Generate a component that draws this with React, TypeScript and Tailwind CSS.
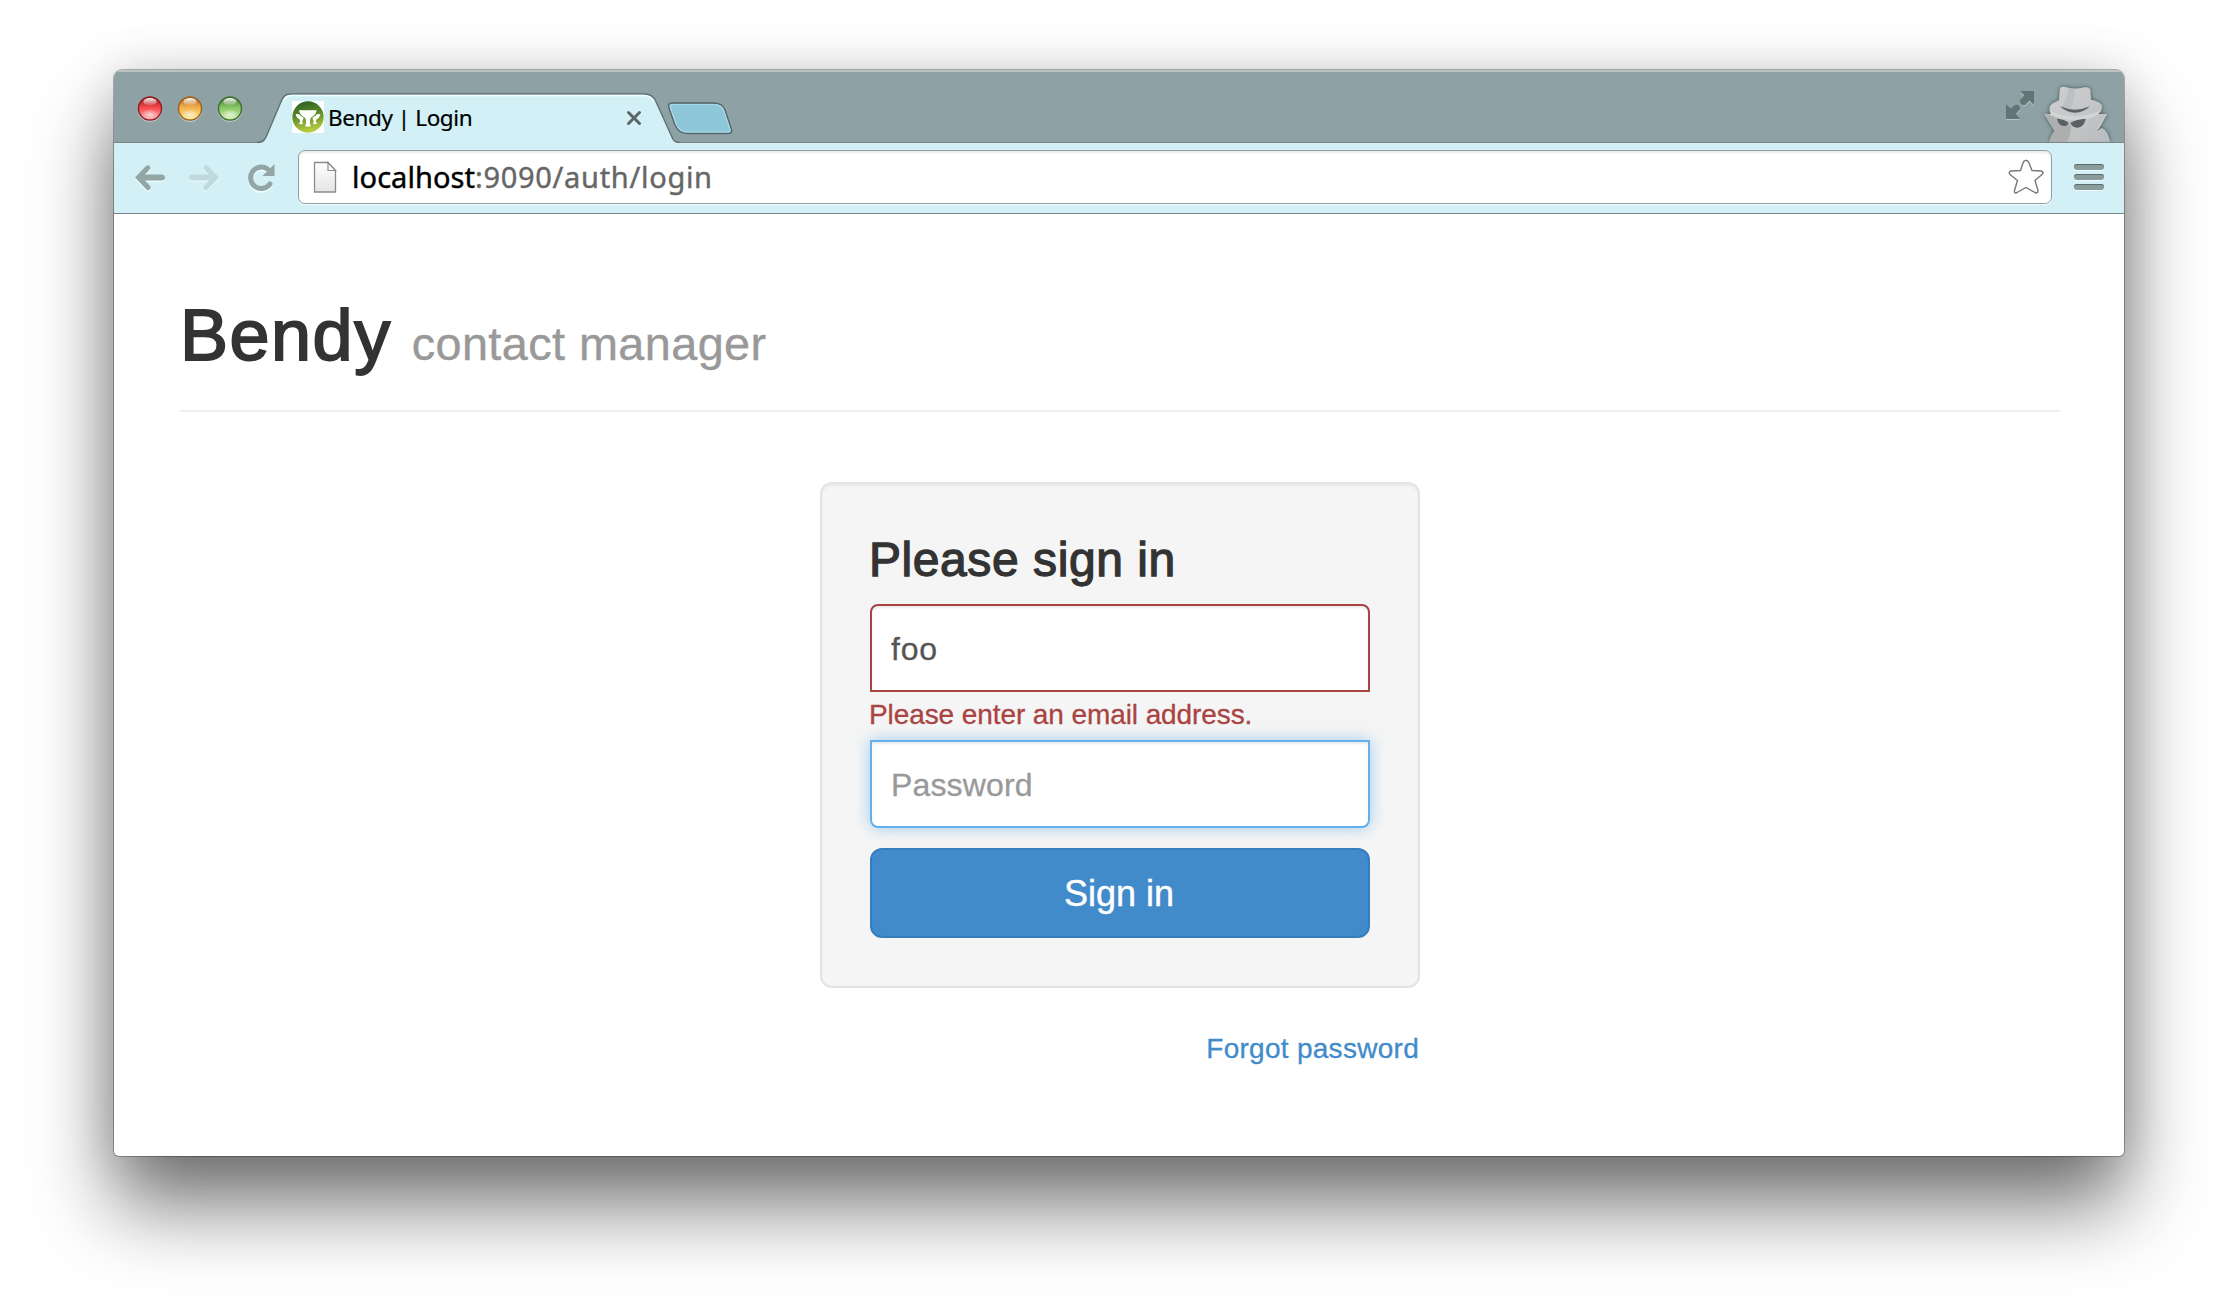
import React from "react";

function Light({ id, dark, mid, glow }: { id: string; dark: string; mid: string; glow: string }) {
  return (
    <svg width="26" height="28" viewBox="0 0 26 28" className="block">
      <defs>
        <linearGradient id={id + "b"} x1="0" y1="0" x2="0" y2="1">
          <stop offset="0" stopColor={dark} />
          <stop offset="0.45" stopColor={mid} />
          <stop offset="1" stopColor={glow} />
        </linearGradient>
        <linearGradient id={id + "s"} x1="0" y1="0" x2="0" y2="1">
          <stop offset="0" stopColor="#fff" stopOpacity="0.95" />
          <stop offset="1" stopColor="#fff" stopOpacity="0.1" />
        </linearGradient>
        <radialGradient id={id + "g"}>
          <stop offset="0" stopColor="#fff" stopOpacity="0.65" />
          <stop offset="1" stopColor="#fff" stopOpacity="0" />
        </radialGradient>
      </defs>
      <circle cx="13" cy="14.9" r="12" fill="#c3d0d2" opacity="0.8" />
      <circle cx="13" cy="13.5" r="11.5" fill={"url(#" + id + "b)"} stroke={dark} strokeWidth="1.4" />
      <ellipse cx="13" cy="19.5" rx="9" ry="5.5" fill={"url(#" + id + "g)"} />
      <ellipse cx="13" cy="6.7" rx="6.6" ry="3.6" fill={"url(#" + id + "s)"} />
    </svg>
  );
}

function Favicon() {
  return (
    <svg width="32" height="32" viewBox="0 0 96 96" className="block bg-white">
      <defs>
        <linearGradient id="fav" x1="0" y1="0" x2="0.2" y2="1">
          <stop offset="0" stopColor="#245c22" />
          <stop offset="0.5" stopColor="#5c8a2a" />
          <stop offset="1" stopColor="#b4cc3e" />
        </linearGradient>
      </defs>
      <circle cx="48" cy="48" r="47" fill="url(#fav)" />
      <g fill="#fff">
        <path d="M21 28H74Q72 42 59 48Q54 51 54 60V69L57 75Q48 80 39 75L42 69V60Q42 51 36 48Q23 42 21 28Z" />
        <path d="M11 39L22 40Q26 48 34 49V55Q31 57 31 62L33 68Q27 72 21 68L24 62V56Q13 52 11 39Z" />
        <path d="M85 39L74 40Q70 48 62 49V55Q65 57 65 62L63 68Q69 72 75 68L72 62V56Q83 52 85 39Z" />
      </g>
    </svg>
  );
}

function Incognito() {
  return (
    <svg width="72" height="60" viewBox="306 67 216 180" className="block overflow-visible">
      <defs>
        <linearGradient id="spy" x1="0" y1="0" x2="1" y2="1">
          <stop offset="0" stopColor="#cfd0d1" />
          <stop offset="1" stopColor="#b9bcbe" />
        </linearGradient>
        <filter id="spyshadow" x="-20%" y="-20%" width="140%" height="120%">
          <feDropShadow dx="0" dy="0" stdDeviation="6" floodColor="#33403f" floodOpacity="0.9" />
        </filter>
        <clipPath id="spyclip">
          <path d="M360 86Q362 79 376 82Q405 92 434 83Q450 82 451 92L453 120Q488 128 486 142Q484 158 473 163H501L476 208L487 206Q504 214 510 247H328Q333 226 344 214L312 162L333 164Q320 138 345 128L357 122Z" />
        </clipPath>
        <clipPath id="spyframe">
          <path d="M290 50H540V246H290Z" />
        </clipPath>
      </defs>
      <g clipPath="url(#spyframe)">
        <path
          filter="url(#spyshadow)"
          fill="url(#spy)"
          d="M360 86Q362 79 376 82Q405 92 434 83Q450 82 451 92L453 120Q488 128 486 142Q484 158 473 163H501L476 208L487 206Q504 214 510 247H328Q333 226 344 214L312 162L333 164Q320 138 345 128L357 122Z"
        />
      </g>
      <g clipPath="url(#spyclip)">
        <path fill="#b0b2b3" d="M388 78H407Q404 120 388 154L360 146Q380 130 388 78Z" opacity="0.45" />
        <path fill="#a5a7a7" d="M312 162L350 172L392 196Q396 220 380 247H320L344 214Z" opacity="0.75" />
        <path fill="#d5d7d8" d="M326 150Q350 166 400 170Q460 168 486 148L476 164Q450 182 404 182Q350 180 330 164Z" opacity="0.8" />
        <path fill="#c9cbcc" d="M462 222L497 164H503L476 208L487 206L478 214Z" />
        <path fill="#5a6060" d="M459 224L478 206L487 205Q470 212 459 224Z" />
      </g>
      <path fill="#5b6161" d="M360 140Q405 160 450 140Q430 159 405 159Q380 159 360 140Z" />
      <path fill="#5b6161" d="M351 177Q374 178 386 189Q383 199 371 199Q355 197 351 177ZM437 177Q410 178 391 189Q396 204 414 204Q433 201 437 177Z" />
    </svg>
  );
}

function TitleBar() {
  return (
    <div className="flex h-[73px] shrink-0 border-t-2 border-[#bac4c5] bg-[#8ea2a5] shadow-[inset_0_-1px_0_#7c8685]">
      <div className="ml-[23px] mt-[23px] flex gap-[14px]">
        <Light id="r" dark="#8f1d20" mid="#f5484a" glow="#fda9a9" />
        <Light id="y" dark="#a0611c" mid="#f3b04c" glow="#fbe787" />
        <Light id="g" dark="#3f6e2c" mid="#86c663" glow="#cdeba4" />
      </div>
      <div className="relative ml-[14px] mt-[20px] h-[51px] w-[423px]">
        <svg width="423" height="51" viewBox="0 0 425 51" preserveAspectRatio="none" className="absolute inset-0 block">
          <path
            d="M0 51V50.500C6 50.500 8 48 10 43L24 10C26 5 28 2 34 2H389C396 2 399 5 401 10L416 43C418 48 419 50.500 425 50.500V51Z"
            fill="#d2f0f5"
          />
          <path
            d="M0 50.500C6 50.500 8 48 10 43L24 10C26 5 28 2 34 2H389C396 2 399 5 401 10L416 43C418 48 419 50.500 425 50.500"
            fill="none"
            stroke="#5f6f72"
            strokeWidth="1.4"
          />
          <path d="M27 8.500C28.500 5 31 3.500 35 3.500H388C394 3.500 397 5.500 399 9.500" fill="none" stroke="#f2fdff" strokeWidth="1.4" />
        </svg>
        <div className="relative flex h-[50px] items-center pl-[35px] pt-1">
          <div className="-mt-1">
            <Favicon />
          </div>
          <span className="ml-[4px] mt-[-2px] whitespace-nowrap font-['Noto_Sans',sans-serif] text-[22.5px] leading-[30px] tracking-[-0.42px] text-black [-webkit-text-stroke:0.2px_#000]">
            Bendy | Login
          </span>
          <svg width="16" height="16" viewBox="0 0 16 16" className="absolute left-[369px] top-[18px] block">
            <path d="M2.500 2.500L13.500 13.500M13.500 2.500L2.500 13.500" stroke="#5a6668" strokeWidth="3" strokeLinecap="round" />
          </svg>
        </div>
      </div>
      <svg width="68" height="36" viewBox="0 0 68 36" className="-ml-[14px] mt-[28px] block">
        <path
          d="M6 3H47C54 3 57 5 59 10L65 28C66.500 31 66 33.500 62 33.500H22C15 33.500 12 31 9 25L3 8C2 4.500 3 3 6 3Z"
          fill="#8ec7da"
          stroke="#566568"
          strokeWidth="1.5"
        />
        <path d="M4.500 8C4 5 5 4.500 7 4.500H47C53 4.500 56 6 57.500 10L63.500 28C64.500 31 64 32 62 32H22C16 32 13 30 10.500 25Z" fill="none" stroke="#a9d8e6" strokeWidth="1.200" />
      </svg>
      <div className="ml-auto flex">
        <svg width="30" height="30" viewBox="0 0 30 30" className="mr-[7px] mt-[18px] block">
          <g transform="translate(0 1.200)" fill="#b3c4c6">
            <path d="M15 1H29V15L24.500 10.500L20 15Q16 16 15 10L19.500 5.500Z" />
            <path d="M15 29H1V15L5.500 18.500L10 15Q15 14 15 19L11 24Z" />
          </g>
          <path d="M15 1H29V15L24.500 10.500L20 15Q14.500 16 15 10L19.500 5.500Z" fill="#617476" />
          <path d="M15 29H1V14L5.500 18.500L10 15Q15 14 15 19L11 24Z" fill="#617476" />
        </svg>
        <div className="mr-[10px] mt-[10px]">
          <Incognito />
        </div>
      </div>
    </div>
  );
}

const arrow = "M2 14.500L13.500 2.500Q16 1.500 17.500 4.500Q17.500 6 12 11.500H29Q32 12 32 14.500Q32 17 29 17.500H12L17.500 23.500Q18 27 14.500 27.500Z";

function Toolbar() {
  return (
    <div className="flex h-[71px] shrink-0 items-start border-b border-[#74868a] bg-[#d2f0f5] pt-[7px]">
      <svg width="33" height="32" viewBox="0 0 33 32" className="ml-[19px] mt-[13px] block">
        <path d={arrow} fill="#eefcff" transform="translate(0 1.500)" />
        <path d={arrow} fill="#93a6a5" />
      </svg>
      <svg width="33" height="32" viewBox="0 0 33 32" className="ml-[22px] mt-[13px] block">
        <path d={arrow} fill="#e4f8fc" transform="translate(33 1.500) scale(-1 1)" />
        <path d={arrow} fill="#bfd9df" transform="translate(33 0) scale(-1 1)" />
      </svg>
      <svg width="30" height="32" viewBox="0 0 30 32" className="ml-[26px] mt-[13px] block">
        <g transform="translate(0 1.500)">
          <path d="M20.500 6.500A10.700 10.700 0 1 0 23 21" fill="none" stroke="#eefcff" strokeWidth="5" strokeLinecap="round" />
        </g>
        <path d="M20.500 6A10.700 10.700 0 1 0 23 21" fill="none" stroke="#93a6a5" strokeWidth="5" strokeLinecap="round" />
        <path d="M27.500 1V13H15.500Z" fill="#93a6a5" />
      </svg>
      <div className="ml-[21px] flex h-[54px] w-[1754px] items-start rounded-[7px] border border-[#8da1a5] bg-white shadow-[inset_0_2px_2px_rgba(0,0,0,0.08),0_1px_0_#f0fcff]">
        <svg width="24" height="34" viewBox="0 0 24 34" className="ml-[14px] mt-[10px] block">
          <defs>
            <linearGradient id="doc" x1="0" y1="0" x2="0" y2="1">
              <stop offset="0" stopColor="#fff" />
              <stop offset="1" stopColor="#e4e4e4" />
            </linearGradient>
          </defs>
          <path d="M1.500 1.500H15L22.500 9.500V31H1.500Z" fill="url(#doc)" stroke="#8b8b8b" strokeWidth="1.300" />
          <path d="M15 1.500V9.500H22.500Z" fill="#fff" stroke="#8b8b8b" strokeWidth="1.200" />
        </svg>
        <span className="ml-[15px] mt-[6px] whitespace-nowrap font-['Noto_Sans',sans-serif] text-[29px] leading-[40px] tracking-[0.7px] text-[#666] [-webkit-text-stroke:0.4px_#666]">
          <span className="tracking-[0.05px] text-black [-webkit-text-stroke:0.4px_#000]">localhost</span>:9090/auth/login
        </span>
        <svg width="38" height="38" viewBox="0 0 38 38" className="ml-auto mr-[6px] mt-[7px] block">
          <path
            d="M19 2.500Q21 2 22 5L25 12.500L34 13Q37.500 14 35 16.500L28 22.500L31 32.500Q31 36 28 34.500L19 29.500L10 34.500Q7 36 7.500 32.500L10.500 22.500L3 16.500Q1 14 4 13L13.500 12.500L16 5Q17 2 19 2.500Z"
            fill="#fff"
            stroke="#777"
            strokeWidth="1.400"
          />
        </svg>
      </div>
      <div className="ml-[22px] mt-[14px] flex flex-col gap-1">
        <div className="h-[6px] w-[30px] rounded-[3px] bg-[#8a9d9b] shadow-[inset_0_1px_0_#5c6d6d,0_1px_0_#effcff]" />
        <div className="h-[6px] w-[30px] rounded-[3px] bg-[#8a9d9b] shadow-[inset_0_1px_0_#5c6d6d,0_1px_0_#effcff]" />
        <div className="h-[6px] w-[30px] rounded-[3px] bg-[#8a9d9b] shadow-[inset_0_1px_0_#5c6d6d,0_1px_0_#effcff]" />
      </div>
    </div>
  );
}

export default function App() {
  return (
    <div className="h-[1314px] w-[2238px] overflow-hidden bg-white pl-[114px] pt-[70px] font-['Liberation_Sans',Arial,sans-serif]">
      <div className="flex h-[1086px] w-[2010px] flex-col rounded-t-[8px] rounded-b-[5px] bg-white shadow-[0_0_0_1px_rgba(0,0,0,0.28),0_50px_80px_rgba(0,0,0,0.54),0_0_50px_rgba(0,0,0,0.14)]">
        <div className="flex flex-col overflow-hidden rounded-t-[8px]">
          <TitleBar />
          <Toolbar />
        </div>
        <main className="pl-[66px] pr-[64px]">
          <header className="flex h-[198px] items-baseline border-b-2 border-[#eee] pt-[81px] text-[72px] leading-[80px] text-[#333]">
            <h1 className="tracking-[1.5px] [-webkit-text-stroke:1.9px_#333]">Bendy</h1>
            <span className="ml-[20px] text-[46.8px] tracking-[0.42px] text-[#999] [-webkit-text-stroke:0.4px_#999]">contact manager</span>
          </header>
          <div className="mx-auto mt-[70px] w-[600px]">
            <form className="h-[506px] rounded-[12px] border-2 border-[#e3e3e3] bg-[#f5f5f5] px-[48px] pt-[48px] shadow-[inset_0_2px_2px_rgba(0,0,0,0.05)]">
              <h2 className="-ml-px text-[48px] leading-[56px] tracking-[0.57px] text-[#333] [-webkit-text-stroke:1.3px_#333]">Please sign in</h2>
              <div className="mt-[16px] flex h-[88px] items-center rounded-t-[8px] border-2 border-[#a94442] bg-white pl-[19px] pt-px text-[32px] tracking-[0.8px] text-[#555] shadow-[inset_0_2px_2px_rgba(0,0,0,0.075)] [-webkit-text-stroke:0.3px_#555]">
                foo
              </div>
              <p className="-ml-px h-[48px] whitespace-nowrap pt-[3px] text-[28px] leading-[40px] tracking-[-0.09px] text-[#a94442] [-webkit-text-stroke:0.3px_#a94442]">
                Please enter an email address.
              </p>
              <div className="flex h-[88px] items-center rounded-b-[8px] border-2 border-[#66afe9] bg-white pl-[19px] pt-px text-[32px] tracking-[0.15px] text-[#999] shadow-[inset_0_2px_2px_rgba(0,0,0,0.075),0_0_16px_rgba(102,175,233,0.6)] [-webkit-text-stroke:0.3px_#999]">
                Password
              </div>
              <button
                type="button"
                className="mt-[20px] flex h-[90px] w-full items-center justify-center rounded-[12px] border-2 border-[#357ebd] bg-[#428bca] pr-[2px] pt-[2px] text-[36px] text-white [-webkit-text-stroke:0.4px_#fff]"
              >
                Sign in
              </button>
            </form>
            <div className="mt-[40px] pr-px text-right text-[28px] leading-[42px] tracking-[0.28px] text-[#428bca] [-webkit-text-stroke:0.3px_#428bca]">
              Forgot password
            </div>
          </div>
        </main>
      </div>
    </div>
  );
}
